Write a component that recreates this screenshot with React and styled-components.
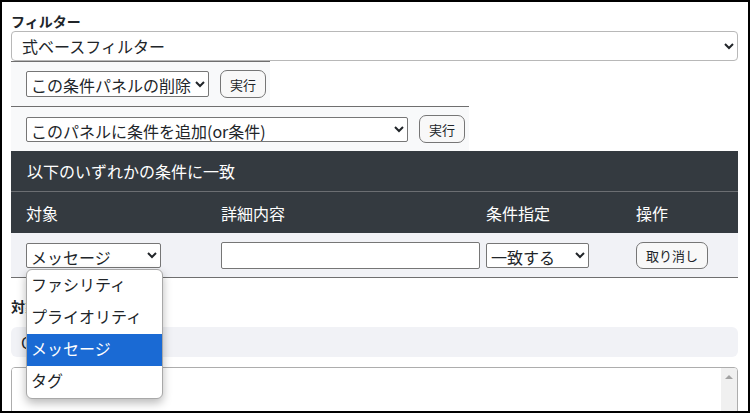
import styled, { createGlobalStyle } from 'styled-components';

const GlobalStyle = createGlobalStyle`
  html, body {
    margin: 0;
    padding: 0;
    background: #fff;
  }
  body {
    font-family: "Noto Sans CJK JP", "Noto Sans", sans-serif;
    color: #212529;
  }
`;

const targetOptions = ['ファシリティ', 'プライオリティ', 'メッセージ', 'タグ'];

const App = () => {
  return (
    <Frame>
      <GlobalStyle />
      <Label>フィルター</Label>
      <FilterSelect defaultValue="formula">
        <option value="formula">式ベースフィルター</option>
      </FilterSelect>

      <Panel>
        <Select $w={183}>
          <option>この条件パネルの削除</option>
        </Select>
        <Button>実行</Button>
      </Panel>
      <Panel>
        <Select $w={382} $h={25}>
          <option>このパネルに条件を追加(or条件)</option>
        </Select>
        <Button>実行</Button>
      </Panel>

      <Table>
        <TitleRow>以下のいずれかの条件に一致</TitleRow>
        <HeadRow>
          <Cell>対象</Cell>
          <Cell>詳細内容</Cell>
          <Cell>条件指定</Cell>
          <Cell>操作</Cell>
        </HeadRow>
        <BodyRow>
          <Cell>
            <SelectAnchor>
              <Select $w={135} $h={25} defaultValue="メッセージ">
                {targetOptions.map((o) => (
                  <option key={o}>{o}</option>
                ))}
              </Select>
              <Menu>
                {targetOptions.map((o) => (
                  <MenuItem key={o} $active={o === 'メッセージ'}>
                    {o}
                  </MenuItem>
                ))}
              </Menu>
            </SelectAnchor>
          </Cell>
          <Cell>
            <TextInput type="text" />
          </Cell>
          <Cell>
            <Select $w={103} $h={25}>
              <option>一致する</option>
            </Select>
          </Cell>
          <Cell>
            <Button $h={27}>取り消し</Button>
          </Cell>
        </BodyRow>
      </Table>

      <Label $gap={18}>対象</Label>
      <InfoBar>OR</InfoBar>
      <TextAreaBox>
        <TextArea />
        <ScrollTrack>
          <ScrollUp />
        </ScrollTrack>
      </TextAreaBox>
    </Frame>
  );
};

const Frame = styled.div`
  width: 750px;
  height: 413px;
  box-sizing: border-box;
  border: 2px solid #000;
  padding: 9px 10px 0 9px;
  overflow: hidden;
`;

const Label = styled.div`
  font-size: 14px;
  font-weight: 700;
  line-height: 20px;
  margin-top: ${(p) => p.$gap || 0}px;
`;

const Select = styled.select`
  font-family: inherit;
  font-size: 16px;
  color: #212529;
  width: ${(p) => p.$w}px;
  height: ${(p) => p.$h || 26}px;
  box-sizing: border-box;
  border: 1px solid #767676;
  border-radius: 2px;
  background-color: #fff;
  padding: 0;
`;

const FilterSelect = styled(Select)`
  display: block;
  width: 100%;
  height: 30px;
  padding-left: 6px;
  border-color: #b8b8b8;
  border-radius: 4px;
`;

const Panel = styled.div`
  display: flex;
  align-items: center;
  gap: 11px;
  width: fit-content;
  background: #f8f9fa;
  border-top: 1px solid #6f6f6f;
  padding: 8px 4px 8px 15px;
`;

const Button = styled.button`
  font-family: inherit;
  font-size: 13px;
  line-height: 1;
  height: ${(p) => p.$h || 28}px;
  padding: 0 9px;
  color: #212529;
  background: #f8f8f8;
  border: 1px solid #767676;
  border-radius: 7px;
`;

const Table = styled.div`
  width: 100%;
`;

const TitleRow = styled.div`
  display: flex;
  align-items: center;
  height: 40px;
  padding-left: 16px;
  font-size: 16px;
  color: #fff;
  background: #343a40;
  border-bottom: 1px solid #6b6e72;
`;

const Row = styled.div`
  display: grid;
  grid-template-columns: 195px 265px 150px 117px;
  align-items: center;
`;

const HeadRow = styled(Row)`
  height: 41px;
  font-size: 16px;
  color: #fff;
  background: #343a40;
`;

const BodyRow = styled(Row)`
  height: 44px;
  background: #f1f2f6;
  border-bottom: 1px solid #6f6f6f;
`;

const Cell = styled.div`
  display: flex;
  align-items: center;
  padding-left: 15px;
`;

const SelectAnchor = styled.div`
  position: relative;
  display: flex;
`;

const Menu = styled.ul`
  position: absolute;
  top: calc(100% + 1px);
  left: 0;
  z-index: 5;
  width: 135px;
  margin: 0;
  padding: 0;
  list-style: none;
  background: #fff;
  border: 1px solid #a8a8a8;
  border-radius: 6px;
  box-shadow: 0 4px 10px rgba(0, 0, 0, 0.28);
  overflow: hidden;
`;

const MenuItem = styled.li`
  height: 32px;
  line-height: 29px;
  padding-left: 4px;
  font-size: 16px;
  color: ${(p) => (p.$active ? '#fff' : '#212529')};
  background: ${(p) => (p.$active ? '#1a6ad4' : 'transparent')};
`;

const TextInput = styled.input`
  flex-shrink: 0;
  width: 259px;
  height: 27px;
  box-sizing: border-box;
  border: 1px solid #767676;
  border-radius: 2px;
  background: #fff;
`;

const InfoBar = styled.div`
  margin-top: 11px;
  height: 30px;
  padding-left: 10px;
  line-height: 30px;
  font-size: 16px;
  background: #f1f2f6;
  border-radius: 6px;
`;

const TextAreaBox = styled.div`
  display: flex;
  height: 60px;
  margin-top: 10px;
  box-sizing: border-box;
  border: 1px solid #adadad;
  border-radius: 4px;
  overflow: hidden;
`;

const TextArea = styled.textarea`
  flex: 1;
  border: 0;
  padding: 2px 4px;
  resize: none;
  outline: none;
  font-family: inherit;
`;

const ScrollTrack = styled.div`
  width: 16px;
  background: #f0f0f0;
  display: flex;
  justify-content: center;
  padding-top: 7px;
`;

const ScrollUp = styled.div`
  width: 0;
  height: 0;
  border-left: 4px solid transparent;
  border-right: 4px solid transparent;
  border-bottom: 4px solid #a3a3a3;
`;

export default App;
